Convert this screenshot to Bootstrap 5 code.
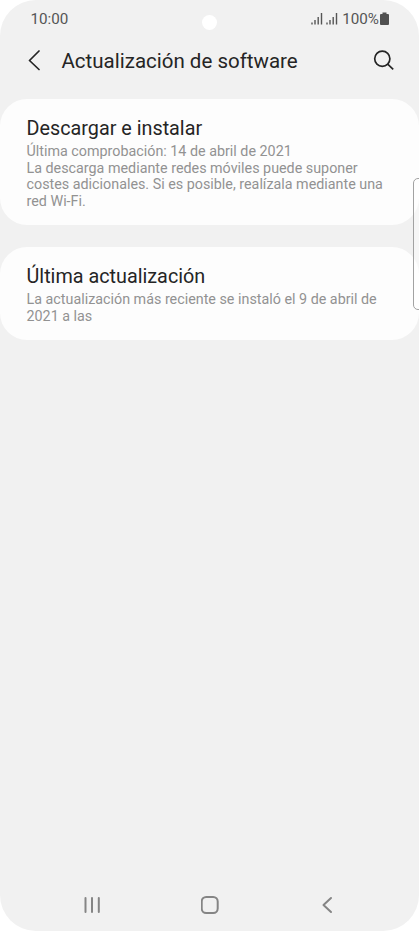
<!DOCTYPE html>
<html lang="es">
<head>
<meta charset="utf-8">
<meta name="viewport" content="width=device-width, initial-scale=1">
<title>Actualización de software</title>
<link href="https://cdn.jsdelivr.net/npm/bootstrap@5.3.0/dist/css/bootstrap.min.css" rel="stylesheet">
<style>
body { font-family: Roboto, "Liberation Sans", sans-serif; background: #fff; color: #252525; }
.phone { width: 419px; height: 931px; background: #f1f1f1; border-radius: 36px; }
.status { height: 36px; padding: 0 29px 0 30.5px; font-size: 15.2px; line-height: 38px; color: #555; }
.status-icons { height: 38px; }
.signal { margin-right: 4.5px; }
.camera { width: 15px; height: 15px; left: 202px; top: 14.5px; background: #fff; }
.appbar { height: 63px; padding: 0 24px 14px 27px; }
.appbar h1 { font-size: 20.5px; line-height: 24px; margin-left: 20.5px; }
.panel { background: #fdfdfd; border-radius: 27px; padding: 18px 26px 0 26.5px; }
.panel-download { height: 126px; margin-bottom: 22px; }
.panel-last { height: 93px; }
.panel h2 { font-size: 19.8px; line-height: 24px; margin-bottom: 2px; }
.panel p { font-size: 14.32px; line-height: 16.7px; color: #929292; }
.edge { left: 413px; top: 178px; width: 12px; height: 132px; border: 1px solid #a2a2a2; border-radius: 5px; background: rgba(255,255,255,.4); }
.navkeys { height: 52px; padding: 0 86.5px 0 83px; }
.key-home { margin-left: -2.5px; }
</style>
</head>
<body>
<main class="phone position-relative overflow-hidden d-flex flex-column">
  <div class="status d-flex justify-content-between">
    <span>10:00</span>
    <span class="status-icons d-flex align-items-center">
      <svg class="signal" width="27" height="14" viewBox="0 0 27 14" stroke="#555" stroke-width="1.4" fill="none"><path d="M1 10.500v2M4 8v4.500M7.200 5v7.500M10.500 1v11.500M16 10.500v2M19 8v4.500M22.200 5v7.500M25.500 1v11.500"/></svg>
      <span>100%</span>
      <svg width="11" height="14" viewBox="0 0 11 14" fill="#505050"><path d="M3.500 .5h4v1.500H9q1 0 1 1V12q0 1-1 1H2q-1 0-1-1V3q0-1 1-1h1.500z"/></svg>
    </span>
  </div>
  <div class="camera position-absolute rounded-circle"></div>
  <header class="appbar d-flex align-items-center">
    <svg width="14" height="22" viewBox="0 0 14 22" fill="none" stroke="#252525" stroke-width="1.700" stroke-linecap="round" stroke-linejoin="round"><path d="M12 1 2.500 10.500 12 19.500"/></svg>
    <h1 class="mb-0 fw-normal text-nowrap">Actualización de software</h1>
    <svg class="ms-auto" width="22" height="22" viewBox="0 0 22 22" fill="none" stroke="#252525" stroke-width="1.700"><circle cx="9.300" cy="8.800" r="7.600"/><path d="m14.700 14.200 5.500 5.200"/></svg>
  </header>
  <section class="panel panel-download">
    <h2 class="fw-normal">Descargar e instalar</h2>
    <p class="mb-0 text-nowrap">Última comprobación: 14 de abril de 2021<br>La descarga mediante redes móviles puede suponer<br>costes adicionales. Si es posible, realízala mediante una<br>red Wi-Fi.</p>
  </section>
  <section class="panel panel-last">
    <h2 class="fw-normal">Última actualización</h2>
    <p class="mb-0 text-nowrap">La actualización más reciente se instaló el 9 de abril de<br>2021 a las</p>
  </section>
  <div class="edge position-absolute"></div>
  <nav class="navkeys mt-auto d-flex justify-content-between align-items-start">
    <svg width="18" height="52" viewBox="0 0 18 52" stroke="#858585" stroke-width="2" stroke-linecap="round"><path d="M2.500 19v14M9 19v14M15.800 19v14"/></svg>
    <svg class="key-home" width="18" height="52" viewBox="0 0 18 52" fill="none" stroke="#858585" stroke-width="2"><rect x=".7" y="18" width="16" height="16" rx="4.500"/></svg>
    <svg width="12" height="52" viewBox="0 0 12 52" fill="none" stroke="#858585" stroke-width="2" stroke-linecap="round" stroke-linejoin="round"><path d="m10 19-7.500 7 7.500 7"/></svg>
  </nav>
</main>
<script src="https://cdn.jsdelivr.net/npm/bootstrap@5.3.0/dist/js/bootstrap.bundle.min.js"></script>
</body>
</html>
